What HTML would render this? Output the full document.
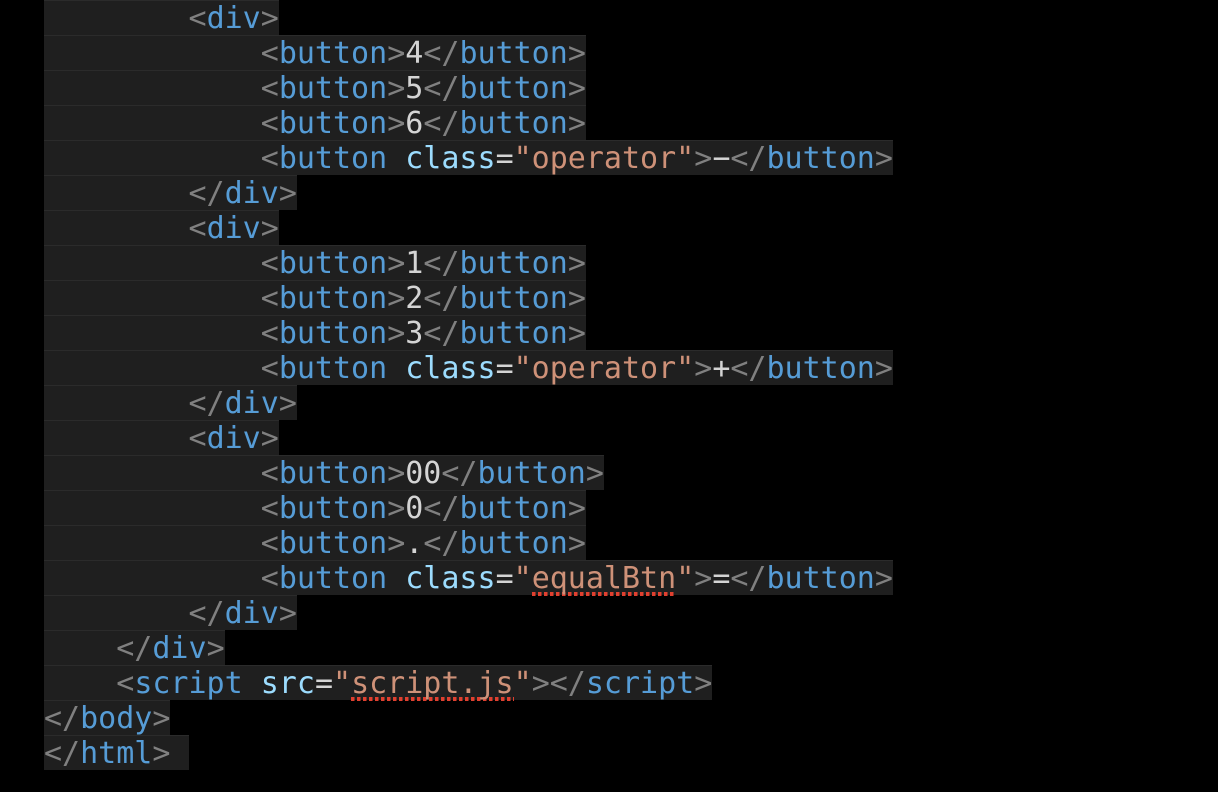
<!DOCTYPE html>
<html><head><style>
html,body{margin:0;padding:0;background:#000;width:1218px;height:792px;overflow:hidden}
.c{position:absolute;left:44px;top:0}
.l{height:35px;line-height:35px;font-family:"DejaVu Sans Mono","Liberation Mono",monospace;font-size:30px;white-space:pre;}
.l span.h{display:inline-block;height:34px;line-height:35px;background:#1f1f1f;border-top:1px solid #2b2b2b;vertical-align:top}
.p{color:#808080}.t{color:#569cd6}.a{color:#9cdcfe}.s{color:#ce9178}.x{color:#d4d4d4}
.w{background-image:linear-gradient(90deg,#e0402f 60%,transparent 60%);background-size:6px 4px;background-repeat:repeat-x;background-position:0 31px}
</style></head><body><div class="c">
<div class="l"><span class="h">        <span class="p">&lt;</span><span class="t">div</span><span class="p">&gt;</span></span></div>
<div class="l"><span class="h">            <span class="p">&lt;</span><span class="t">button</span><span class="p">&gt;</span><span class="x">4</span><span class="p">&lt;/</span><span class="t">button</span><span class="p">&gt;</span></span></div>
<div class="l"><span class="h">            <span class="p">&lt;</span><span class="t">button</span><span class="p">&gt;</span><span class="x">5</span><span class="p">&lt;/</span><span class="t">button</span><span class="p">&gt;</span></span></div>
<div class="l"><span class="h">            <span class="p">&lt;</span><span class="t">button</span><span class="p">&gt;</span><span class="x">6</span><span class="p">&lt;/</span><span class="t">button</span><span class="p">&gt;</span></span></div>
<div class="l"><span class="h">            <span class="p">&lt;</span><span class="t">button</span> <span class="a">class</span><span class="x">=</span><span class="s">"operator"</span><span class="p">&gt;</span><span class="x">−</span><span class="p">&lt;/</span><span class="t">button</span><span class="p">&gt;</span></span></div>
<div class="l"><span class="h">        <span class="p">&lt;/</span><span class="t">div</span><span class="p">&gt;</span></span></div>
<div class="l"><span class="h">        <span class="p">&lt;</span><span class="t">div</span><span class="p">&gt;</span></span></div>
<div class="l"><span class="h">            <span class="p">&lt;</span><span class="t">button</span><span class="p">&gt;</span><span class="x">1</span><span class="p">&lt;/</span><span class="t">button</span><span class="p">&gt;</span></span></div>
<div class="l"><span class="h">            <span class="p">&lt;</span><span class="t">button</span><span class="p">&gt;</span><span class="x">2</span><span class="p">&lt;/</span><span class="t">button</span><span class="p">&gt;</span></span></div>
<div class="l"><span class="h">            <span class="p">&lt;</span><span class="t">button</span><span class="p">&gt;</span><span class="x">3</span><span class="p">&lt;/</span><span class="t">button</span><span class="p">&gt;</span></span></div>
<div class="l"><span class="h">            <span class="p">&lt;</span><span class="t">button</span> <span class="a">class</span><span class="x">=</span><span class="s">"operator"</span><span class="p">&gt;</span><span class="x">+</span><span class="p">&lt;/</span><span class="t">button</span><span class="p">&gt;</span></span></div>
<div class="l"><span class="h">        <span class="p">&lt;/</span><span class="t">div</span><span class="p">&gt;</span></span></div>
<div class="l"><span class="h">        <span class="p">&lt;</span><span class="t">div</span><span class="p">&gt;</span></span></div>
<div class="l"><span class="h">            <span class="p">&lt;</span><span class="t">button</span><span class="p">&gt;</span><span class="x">00</span><span class="p">&lt;/</span><span class="t">button</span><span class="p">&gt;</span></span></div>
<div class="l"><span class="h">            <span class="p">&lt;</span><span class="t">button</span><span class="p">&gt;</span><span class="x">0</span><span class="p">&lt;/</span><span class="t">button</span><span class="p">&gt;</span></span></div>
<div class="l"><span class="h">            <span class="p">&lt;</span><span class="t">button</span><span class="p">&gt;</span><span class="x">.</span><span class="p">&lt;/</span><span class="t">button</span><span class="p">&gt;</span></span></div>
<div class="l"><span class="h">            <span class="p">&lt;</span><span class="t">button</span> <span class="a">class</span><span class="x">=</span><span class="s">"<span class="w">equalBtn</span>"</span><span class="p">&gt;</span><span class="x">=</span><span class="p">&lt;/</span><span class="t">button</span><span class="p">&gt;</span></span></div>
<div class="l"><span class="h">        <span class="p">&lt;/</span><span class="t">div</span><span class="p">&gt;</span></span></div>
<div class="l"><span class="h">    <span class="p">&lt;/</span><span class="t">div</span><span class="p">&gt;</span></span></div>
<div class="l"><span class="h">    <span class="p">&lt;</span><span class="t">script</span> <span class="a">src</span><span class="x">=</span><span class="s">"<span class="w">script.js</span>"</span><span class="p">&gt;&lt;/</span><span class="t">script</span><span class="p">&gt;</span></span></div>
<div class="l"><span class="h"><span class="p">&lt;/</span><span class="t">body</span><span class="p">&gt;</span></span></div>
<div class="l"><span class="h"><span class="p">&lt;/</span><span class="t">html</span><span class="p">&gt;</span> </span></div>
</div></body></html>
